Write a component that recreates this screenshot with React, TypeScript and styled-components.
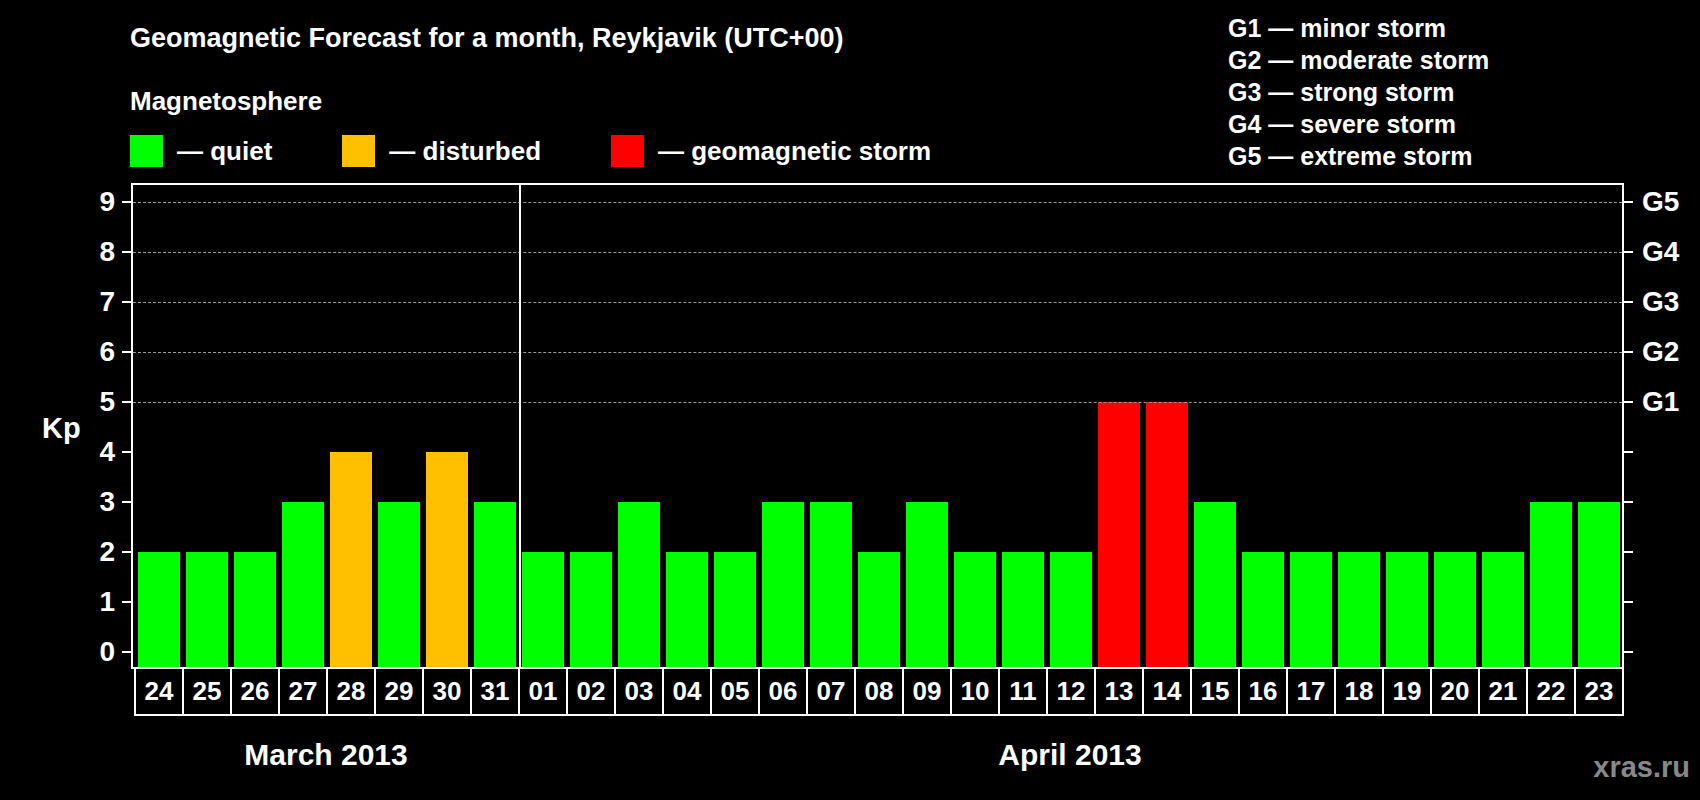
import React from "react";
import styled, { createGlobalStyle } from "styled-components";

const Global = createGlobalStyle`
  html, body { margin: 0; padding: 0; background: #000; }
  body { font-family: "Liberation Sans", Arial, sans-serif; font-weight: bold; color: #fff; }
`;

const GREEN = "#00ff00";
const ORANGE = "#ffc000";
const RED = "#ff0000";

const data: [string, number, string][] = [
  ["24", 2, GREEN], ["25", 2, GREEN], ["26", 2, GREEN], ["27", 3, GREEN], ["28", 4, ORANGE],
  ["29", 3, GREEN], ["30", 4, ORANGE], ["31", 3, GREEN], ["01", 2, GREEN], ["02", 2, GREEN],
  ["03", 3, GREEN], ["04", 2, GREEN], ["05", 2, GREEN], ["06", 3, GREEN], ["07", 3, GREEN],
  ["08", 2, GREEN], ["09", 3, GREEN], ["10", 2, GREEN], ["11", 2, GREEN], ["12", 2, GREEN],
  ["13", 5, RED], ["14", 5, RED], ["15", 3, GREEN], ["16", 2, GREEN], ["17", 2, GREEN],
  ["18", 2, GREEN], ["19", 2, GREEN], ["20", 2, GREEN], ["21", 2, GREEN], ["22", 3, GREEN],
  ["23", 3, GREEN],
];

const ZERO = 468.7; // y of Kp 0 relative to plot top
const UNIT = 50;

const Page = styled.div`
  position: relative;
  width: 1700px;
  height: 800px;
  overflow: hidden;
  display: flex;
  flex-direction: column;
`;

const Header = styled.div`
  display: flex;
  height: 183px;
  padding-left: 130px;
  box-sizing: border-box;
`;

const LeftCol = styled.div`
  width: 1098px;
  display: flex;
  flex-direction: column;
`;

const Title = styled.div`
  margin-top: 25px;
  font-size: 27px;
  line-height: 1;
  white-space: nowrap;
`;

const Sub = styled.div`
  margin-top: 36px;
  font-size: 26px;
  line-height: 1;
`;

const Legend = styled.div`
  margin-top: 21px;
  display: flex;
  gap: 70px;
`;

const LegendItem = styled.div`
  display: flex;
  align-items: center;
  gap: 14px;
  font-size: 26px;
  height: 32px;
`;

const Swatch = styled.div<{ $c: string }>`
  width: 33px;
  height: 32px;
  background: ${(p) => p.$c};
`;

const GList = styled.div`
  padding-top: 12px;
  display: flex;
  flex-direction: column;
`;

const GLine = styled.div`
  font-size: 25px;
  line-height: 32px;
  white-space: nowrap;
`;

const ChartRow = styled.div`
  display: flex;
  height: 486px;
`;

const Axis = styled.div<{ $w: number }>`
  position: relative;
  width: ${(p) => p.$w}px;
  height: 100%;
`;

const TickLabelL = styled.div`
  position: absolute;
  right: 16px;
  font-size: 28px;
  line-height: 30px;
  transform: translateY(-50%);
`;

const TickLabelR = styled.div`
  position: absolute;
  left: 18px;
  font-size: 28px;
  line-height: 30px;
  transform: translateY(-50%);
`;

const Tick = styled.div<{ $side: "l" | "r" }>`
  position: absolute;
  ${(p) => (p.$side === "l" ? "right: 0;" : "left: 0;")}
  width: 9px;
  height: 2px;
  background: #fff;
  transform: translateY(-50%);
`;

const KpLabel = styled.div`
  position: absolute;
  left: 42px;
  top: 245px;
  font-size: 29px;
  line-height: 30px;
  transform: translateY(-50%);
`;

const Plot = styled.div`
  position: relative;
  width: 1493px;
  height: 486px;
  box-sizing: border-box;
  border: 2px solid #fff;
  display: flex;
  align-items: flex-end;
  gap: 6px;
  padding-left: 5px;
`;

const GridLine = styled.div`
  position: absolute;
  left: 0;
  right: 0;
  border-top: 1px dashed #9a9a9a;
`;

const Divider = styled.div`
  position: absolute;
  top: 0;
  bottom: 0;
  left: 386px;
  width: 2px;
  background: #fff;
`;

const Bar = styled.div<{ $c: string }>`
  width: 42px;
  background: ${(p) => p.$c};
  flex-shrink: 0;
`;

const LabelRow = styled.div`
  display: flex;
  margin-left: 134px;
  border-left: 2px solid #fff;
  width: max-content;
`;

const DayCell = styled.div`
  width: 46px;
  height: 45px;
  border-right: 2px solid #fff;
  border-bottom: 2px solid #fff;
  display: flex;
  align-items: center;
  justify-content: center;
  font-size: 26px;
`;

const MonthRow = styled.div`
  display: flex;
  margin-left: 134px;
  margin-top: 24px;
`;

const Month = styled.div<{ $w: number }>`
  width: ${(p) => p.$w}px;
  text-align: center;
  font-size: 30px;
  line-height: 1;
`;

const Watermark = styled.div`
  position: absolute;
  right: 10px;
  top: 753px;
  font-size: 29px;
  line-height: 1;
  color: #888;
`;

export default function App() {
  const levels = [0, 1, 2, 3, 4, 5, 6, 7, 8, 9];
  const gLabels: Record<number, string> = { 5: "G1", 6: "G2", 7: "G3", 8: "G4", 9: "G5" };
  return (
    <Page>
      <Global />
      <Header>
        <LeftCol>
          <Title>Geomagnetic Forecast for a month, Reykjavik (UTC+00)</Title>
          <Sub>Magnetosphere</Sub>
          <Legend>
            <LegendItem><Swatch $c={GREEN} />— quiet</LegendItem>
            <LegendItem><Swatch $c={ORANGE} />— disturbed</LegendItem>
            <LegendItem><Swatch $c={RED} />— geomagnetic storm</LegendItem>
          </Legend>
        </LeftCol>
        <GList>
          <GLine>G1 — minor storm</GLine>
          <GLine>G2 — moderate storm</GLine>
          <GLine>G3 — strong storm</GLine>
          <GLine>G4 — severe storm</GLine>
          <GLine>G5 — extreme storm</GLine>
        </GList>
      </Header>
      <ChartRow>
        <Axis $w={131}>
          <KpLabel>Kp</KpLabel>
          {levels.map((v) => (
            <React.Fragment key={v}>
              <TickLabelL style={{ top: ZERO - UNIT * v }}>{v}</TickLabelL>
              <Tick $side="l" style={{ top: ZERO - UNIT * v }} />
            </React.Fragment>
          ))}
        </Axis>
        <Plot>
          {[5, 6, 7, 8, 9].map((v) => (
            <GridLine key={v} style={{ top: ZERO - UNIT * v - 2 }} />
          ))}
          <Divider />
          {data.map(([d, v, c]) => (
            <Bar key={d} $c={c} style={{ height: v * UNIT + 15 }} />
          ))}
        </Plot>
        <Axis $w={76}>
          {levels.map((v) => (
            <React.Fragment key={v}>
              <Tick $side="r" style={{ top: ZERO - UNIT * v }} />
              {gLabels[v] && <TickLabelR style={{ top: ZERO - UNIT * v }}>{gLabels[v]}</TickLabelR>}
            </React.Fragment>
          ))}
        </Axis>
      </ChartRow>
      <LabelRow>
        {data.map(([d]) => (
          <DayCell key={d}>{d}</DayCell>
        ))}
      </LabelRow>
      <MonthRow>
        <Month $w={8 * 48}>March 2013</Month>
        <Month $w={23 * 48}>April 2013</Month>
      </MonthRow>
      <Watermark>xras.ru</Watermark>
    </Page>
  );
}
